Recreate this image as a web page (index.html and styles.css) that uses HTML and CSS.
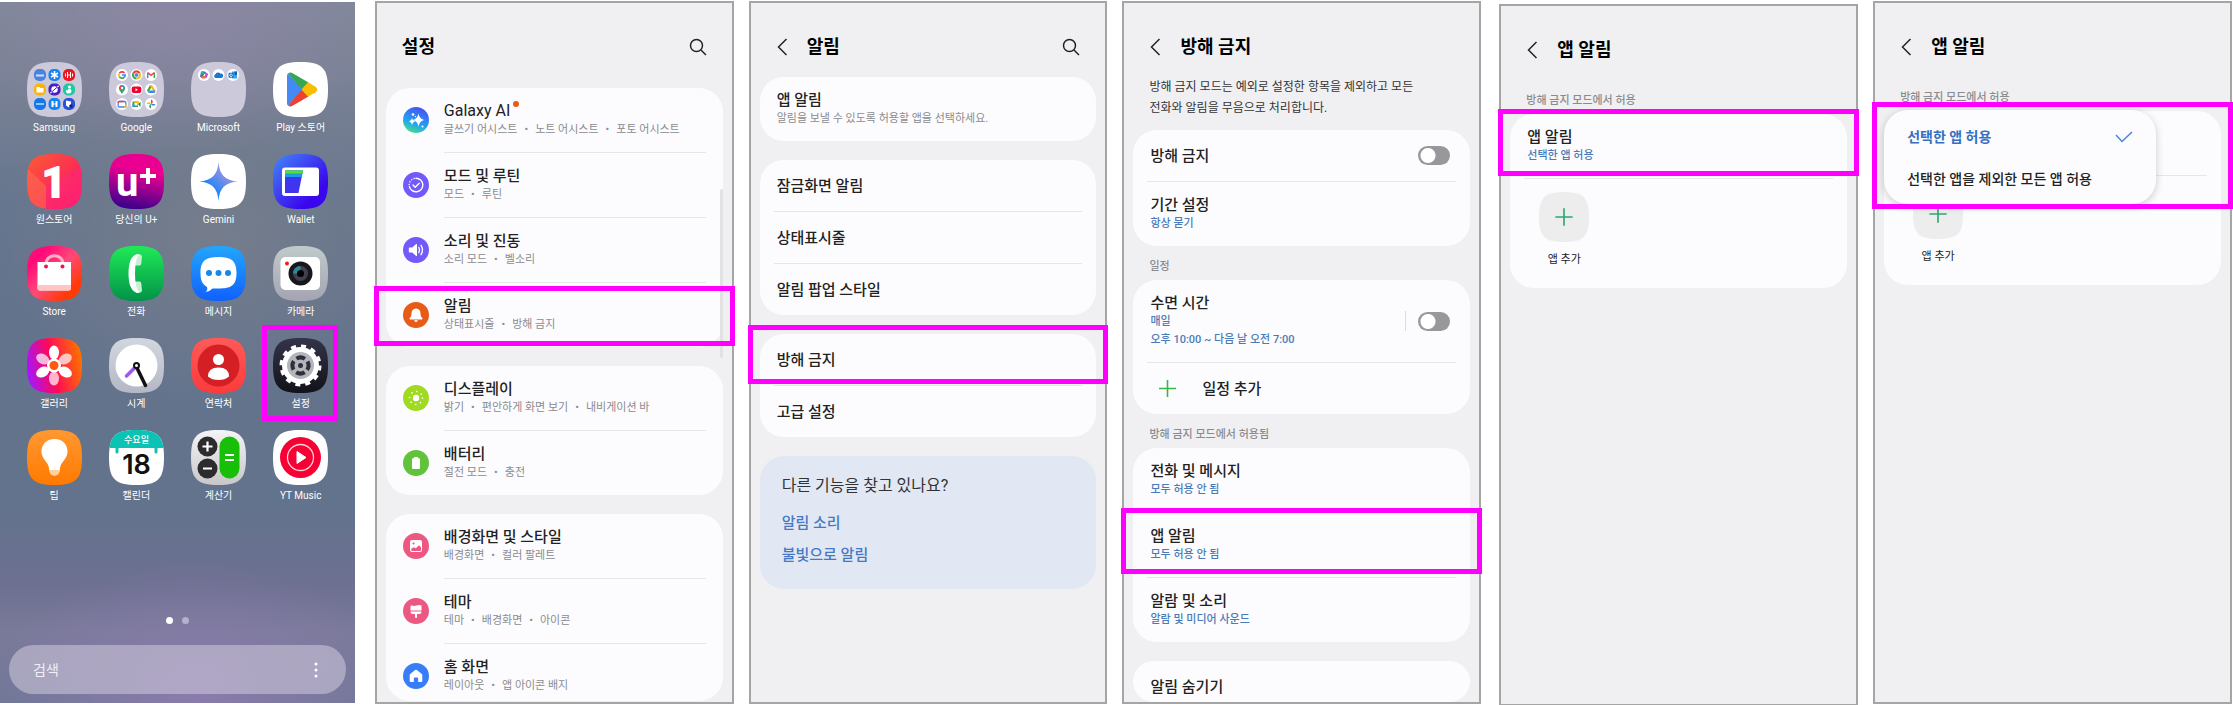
FILE: index.html
```html
<!DOCTYPE html>
<html lang="ko">
<head>
  <meta charset="UTF-8" />
  <meta name="viewport" content="width=device-width, initial-scale=1.0"/>
  <title>방해 금지 설정 방법</title>
  <link rel="stylesheet" href="styles.css">
</head>
<body>
  <svg class="defs" aria-hidden="true">
    <defs>
      <path id="tile" d="M27.5 0C49 0 55 6 55 27.5S49 55 27.5 55 0 49 0 27.5 6 0 27.5 0Z"/>
      <rect id="mini" width="12" height="12" rx="5"/>
      <circle id="miniRound" cx="6" cy="6" r="6"/>
      <clipPath id="tileClip"><use href="#tile"/></clipPath>
      <linearGradient id="gOne" x1="0" y1="0" x2="1" y2="1"><stop offset="0" stop-color="#fb5c33"/><stop offset="1" stop-color="#fb0a6c"/></linearGradient>
      <linearGradient id="gUplus" x1=".6" y1="0" x2=".4" y2="1"><stop offset=".3" stop-color="#ea0090"/><stop offset="1" stop-color="#38008c"/></linearGradient>
      <linearGradient id="gGemini" x1="0" y1="1" x2="1" y2="0"><stop offset=".3" stop-color="#1a84f5"/><stop offset=".8" stop-color="#b596e0"/></linearGradient>
      <linearGradient id="gWallet" x1="0" y1="0" x2="1" y2="1"><stop offset="0" stop-color="#4289f7"/><stop offset=".75" stop-color="#3a06ee"/></linearGradient>
      <linearGradient id="gStore" x1="0" y1="0" x2="1" y2="1"><stop offset=".2" stop-color="#ff0a78"/><stop offset=".5" stop-color="#ff4a78"/><stop offset=".8" stop-color="#ff3a08"/></linearGradient>
      <linearGradient id="gPhone" x1="0" y1="0" x2="0" y2="1"><stop offset="0" stop-color="#20ea58"/><stop offset="1" stop-color="#019248"/></linearGradient>
      <linearGradient id="gMsg" x1="0" y1="0" x2="0" y2="1"><stop offset="0" stop-color="#22a6fb"/><stop offset="1" stop-color="#1160fd"/></linearGradient>
      <linearGradient id="gCam" x1="0" y1="0" x2="0" y2="1"><stop offset="0" stop-color="#c1caca"/><stop offset="1" stop-color="#a4a4b2"/></linearGradient>
      <linearGradient id="gGal" x1="0" y1=".6" x2="1" y2=".4"><stop offset="0" stop-color="#a416ff"/><stop offset=".45" stop-color="#ff0858"/><stop offset="1" stop-color="#ff7200"/></linearGradient>
      <linearGradient id="gClock" x1="0" y1="0" x2="0" y2="1"><stop offset="0" stop-color="#d2d7df"/><stop offset="1" stop-color="#b4b8c4"/></linearGradient>
      <linearGradient id="gContact" x1="0" y1="0" x2="0" y2="1"><stop offset="0" stop-color="#ff5a58"/><stop offset="1" stop-color="#fd3a3c"/></linearGradient>
      <linearGradient id="gSet" x1="0" y1="0" x2="0" y2="1"><stop offset="0" stop-color="#34344a"/><stop offset="1" stop-color="#12121a"/></linearGradient>
      <linearGradient id="gTip" x1="0" y1="0" x2="0" y2="1"><stop offset="0" stop-color="#ff9832"/><stop offset="1" stop-color="#ff7a00"/></linearGradient>
      <linearGradient id="gCalc" x1="0" y1="0" x2="0" y2="1"><stop offset="0" stop-color="#f4f4f6"/><stop offset="1" stop-color="#c8c8ca"/></linearGradient>
      <linearGradient id="gAi" x1=".3" y1="1" x2=".7" y2="0"><stop offset="0" stop-color="#4fe07c"/><stop offset=".35" stop-color="#20a8f0"/><stop offset="1" stop-color="#4a4cf4"/></linearGradient>
    </defs>
  </svg>

  <main class="steps">
    <section class="home">
      <div class="apps">
        <a class="app" href="#">
          <svg viewBox="0 0 55 55">
            <use href="#tile" fill="#cbc9da"/>
            <g transform="translate(7 7)">
              <g><use href="#mini" fill="#4a82e0"/><path d="M2 6.5h8" stroke="#cfe0fa" stroke-width="2"/></g>
              <g transform="translate(14.5 0)"><use href="#mini" fill="#1583f5"/><path d="M6 2v8M2.5 4l7 4M9.500 4l-7 4" stroke="#fff" stroke-width="1.600"/></g>
              <g transform="translate(29 0)"><use href="#mini" fill="#f0141e"/><path d="M2.500 4.500v3M4.500 3v6M7.500 3v6M9.500 4.500v3M4.500 6h3" stroke="#fff"/></g>
              <g transform="translate(0 14.500)"><use href="#mini" fill="#f7b50c"/><path d="M2.500 3.500h3l1 1h3v4.500h-7z" fill="#fff"/></g>
              <g transform="translate(14.500 14.500)"><use href="#mini" fill="#4a1fc8"/><circle cx="6" cy="6" r="3.200" fill="#fff"/><path d="M2 9.500l8-7" stroke="#4a1fc8"/><path d="M1.500 9.500l2-1M8.500 3.500l2-1" stroke="#fff"/></g>
              <g transform="translate(29 14.500)"><use href="#mini" fill="#20c9a4"/><circle cx="6.500" cy="3.500" r="1.500" fill="#fff"/><path d="M6 5c3 0 3.500 5 0 5S3 8 3 6.500c1 1 2 0 3-1.500z" fill="#fff"/></g>
              <g transform="translate(0 29)"><use href="#mini" fill="#1478e8"/><path d="M2 6h8" stroke="#9cccf8" stroke-width="1.800"/></g>
              <g transform="translate(14.500 29)"><use href="#mini" fill="#1583f5"/><path d="M4 3v6M8 3v6" stroke="#fff" stroke-width="2"/><path d="M4 6h4" stroke="#fff"/></g>
              <g transform="translate(29 29)"><use href="#mini" fill="#2a50d8"/><path d="M3 2.500l5 1v3.500l-2 2.500-3-2z" fill="#fff"/><circle cx="8" cy="8" r="1.800" fill="#14257a"/></g>
            </g>
          </svg>
          <span>Samsung</span>
        </a>
        <a class="app" href="#">
          <svg viewBox="0 0 55 55">
            <use href="#tile" fill="#cbc9da"/>
            <g transform="translate(7 7)">
              <g><use href="#miniRound" fill="#fff"/><g fill="none" stroke-width="1.600"><path d="M8.500 4A3.200 3.200 0 0 0 3.300 4.400" stroke="#ea4335"/><path d="M3.300 4.400A3.200 3.200 0 0 0 3.300 7.600" stroke="#fbbc04"/><path d="M3.300 7.600A3.200 3.200 0 0 0 8 8.500" stroke="#34a853"/><path d="M8 8.500A3.200 3.200 0 0 0 9.200 6H6" stroke="#4285f4"/></g></g>
              <g transform="translate(14.500 0)"><use href="#miniRound" fill="#fff"/><path d="M6 6L2 3.700A4.600 4.600 0 0 1 10 3.700z" fill="#ea4335"/><path d="M6 6L2 3.700A4.600 4.600 0 0 0 6 10.600z" fill="#34a853"/><path d="M6 6l4-2.300A4.600 4.600 0 0 1 6 10.600z" fill="#fbbc04"/><circle cx="6" cy="6" r="2.200" fill="#4285f4" stroke="#fff" stroke-width=".700"/></g>
              <g transform="translate(29 0)"><use href="#miniRound" fill="#fff"/><path d="M2.700 9V4" stroke="#4285f4" stroke-width="1.500"/><path d="M9.300 9V4" stroke="#34a853" stroke-width="1.500"/><path d="M2.500 3.500L6 6.300l3.500-2.800" stroke="#ea4335" stroke-width="1.600" fill="none"/></g>
              <g transform="translate(0 14.500)"><use href="#miniRound" fill="#fff"/><path d="M6 10.500C5.500 8 3 7 3 4.500a3 3 0 0 1 3-3z" fill="#ea4335"/><path d="M6 10.500C6.500 8 9 7 9 4.500a3 3 0 0 0-3-3z" fill="#4285f4"/><path d="M6 10.500C5.700 9 4.200 8 3.500 6.500L8.600 3.500C10 6.500 6.500 8 6 10.500z" fill="#34a853"/><circle cx="6" cy="4.500" r="1.200" fill="#fff"/></g>
              <g transform="translate(14.500 14.500)"><use href="#miniRound" fill="#fff"/><rect x="1.200" y="3" width="9.600" height="6.500" rx="2" fill="#f5002e"/><path d="M5 4.800v3l2.500-1.500z" fill="#fff"/></g>
              <g transform="translate(29 14.500)"><use href="#miniRound" fill="#fff"/><path d="M4.700 2h2.600L3.300 9 2 7z" fill="#34a853"/><path d="M7.300 2H4.700l3.500 5.500h2.500z" fill="#fbbc04"/><path d="M4.500 7h6.200l-1.200 2.500H3.200z" fill="#4285f4"/></g>
              <g transform="translate(0 29)"><use href="#miniRound" fill="#fff"/><rect x="2.200" y="3.500" width="7.600" height="5.500" rx="1" fill="none" stroke="#4285f4" stroke-width="1.300"/><path d="M2.200 5V4.500a1 1 0 0 1 1-1H8" stroke="#ea4335" stroke-width="1.300" fill="none"/><path d="M9.800 6v3H8" stroke="#fbbc04" stroke-width="1.300" fill="none"/></g>
              <g transform="translate(14.500 29)"><use href="#miniRound" fill="#fff"/><path d="M2 3.500h5.500V9H2z" fill="#34a853"/><path d="M2 5.500h2V9H2z" fill="#4285f4"/><path d="M4 3.200h4.500v2.300H4z" fill="#fbbc04"/><path d="M4 5h3v2.500H4z" fill="#fff"/><path d="M7.500 6l2.500-2v5z" fill="#0a8a3c"/></g>
              <g transform="translate(29 29)"><use href="#miniRound" fill="#fff"/><path d="M6 6V1.500A2.300 2.300 0 0 1 6 6z" fill="#ea4335"/><path d="M6 6h4.500A2.300 2.300 0 0 1 6 6z" fill="#4285f4"/><path d="M6 6v4.500A2.300 2.300 0 0 1 6 6z" fill="#34a853"/><path d="M6 6H1.500A2.300 2.300 0 0 1 6 6z" fill="#fbbc04"/></g>
            </g>
          </svg>
          <span>Google</span>
        </a>
        <a class="app" href="#">
          <svg viewBox="0 0 55 55">
            <use href="#tile" fill="#cbc9da"/>
            <g transform="translate(7 7)">
              <g><use href="#miniRound" fill="#fff"/><path d="M3 2.500h4l1.500 2L6 5 4.500 9 2 8z" fill="#2a6fd0"/><path d="M8 3.500L10.300 5 8.500 9 6 8.500z" fill="#c050d0"/><path d="M2.500 7h4l1 2.500H4z" fill="#e8702a"/><path d="M3 3l2-1 1.500 2-3 2z" fill="#30b880"/></g>
              <g transform="translate(14.500 0)"><use href="#miniRound" fill="#fff"/><path d="M3.200 9a1.900 1.900 0 0 1-.2-3.700A2.800 2.800 0 0 1 8 4.700 2.200 2.200 0 0 1 9 9z" fill="#1478d4"/></g>
              <g transform="translate(29 0)"><use href="#miniRound" fill="#fff"/><path d="M5 2.500h5v7H5z" fill="#35a8ee"/><path d="M7.500 2.500H10V6H7.500z" fill="#0a62b8"/><rect x="1.500" y="3.800" width="5" height="5" rx="1" fill="#0f6cc4"/><circle cx="4" cy="6.300" r="1.300" fill="none" stroke="#fff" stroke-width=".8"/></g>
            </g>
          </svg>
          <span>Microsoft</span>
        </a>
        <a class="app" href="#">
          <svg viewBox="0 0 55 55">
            <use href="#tile" fill="#fff"/>
            <path d="M15 11.500Q14 12 14 14v27q0 2 1 2.500L30.500 27.500z" fill="#4489f4"/>
            <path d="M15 11.500q2-2 5 0l15.500 9-6.500 7z" fill="#34a751"/>
            <path d="M15 43.500q2 2 5 0l15.500-9-6.500-7z" fill="#ea4333"/>
            <path d="M35 20.300l7.500 4.500q3.500 2.700 0 5.400L35 34.700l-6.500-7.200z" fill="#fbbc04"/>
          </svg>
          <span>Play 스토어</span>
        </a>

        <a class="app" href="#">
          <svg viewBox="0 0 55 55">
            <g clip-path="url(#tileClip)">
              <rect width="55" height="55" fill="url(#gOne)"/>
              <path d="M0 14l19 18v23H0z" fill="#ff6a50" opacity=".6"/>
              <path d="M19 32l36-20v43H19z" fill="#ff2a76" opacity=".6"/>
              <text class="logo-one" x="15" y="43">1</text>
            </g>
          </svg>
          <span>원스토어</span>
        </a>
        <a class="app" href="#">
          <svg viewBox="0 0 55 55">
            <use href="#tile" fill="url(#gUplus)"/>
            <text class="logo-u" x="7" y="42">u</text>
            <path d="M39 14v16M31 22h16" stroke="#fff" stroke-width="4"/>
          </svg>
          <span>당신의 U+</span>
        </a>
        <a class="app" href="#">
          <svg viewBox="0 0 55 55">
            <use href="#tile" fill="#fff"/>
            <path d="M27.500 8C28.500 21 34 26.500 47 27.500 34 28.500 28.500 34 27.500 47 26.500 34 21 28.500 8 27.500 21 26.500 26.500 21 27.500 8Z" fill="url(#gGemini)"/>
          </svg>
          <span>Gemini</span>
        </a>
        <a class="app" href="#">
          <svg viewBox="0 0 55 55">
            <use href="#tile" fill="url(#gWallet)"/>
            <rect x="9" y="13.500" width="37" height="28.500" rx="3" fill="#fff"/>
            <path d="M12 39V17.500q0-1 1-1h17L25.500 39z" fill="#3f35f0"/>
            <path d="M12 23v-5.500q0-1 1-1h17L28.500 23z" fill="#1c9be8"/>
            <path d="M12 19.500v-2q0-1 1-1h17l-.7 3z" fill="#5ae01c"/>
          </svg>
          <span>Wallet</span>
        </a>

        <a class="app" href="#">
          <svg viewBox="0 0 55 55">
            <use href="#tile" fill="url(#gStore)"/>
            <path d="M19 18c0-11 17-11 17 0" fill="none" stroke="#ffb0c8" stroke-width="3"/>
            <path d="M10.500 16H44v26q0 2.500-2.500 2.500H13q-2.500 0-2.500-2.500z" fill="#fff"/>
            <path d="M10.500 39H44v3q0 2.500-2.500 2.500H13q-2.500 0-2.500-2.500z" fill="#ffc4c4"/>
            <circle cx="19" cy="20.500" r="2" fill="#e81858"/><circle cx="35.500" cy="20.500" r="2" fill="#e81858"/>
          </svg>
          <span>Store</span>
        </a>
        <a class="app" href="#">
          <svg viewBox="0 0 55 55">
            <use href="#tile" fill="url(#gPhone)"/>
            <path d="M27 8.500q4-1.500 6 1.500l-.7 7.500q0 2-2 2H26q-1-6 1-11zM27 46.500q4 1.500 6-1.500l-.7-7.500q0-2-2-2H26q-1 6 1 11z" fill="#c4f0d4"/>
            <path d="M27 8.500q2-.5 3 .5-4 4-4 18.500t4 18.500q-1 1-3 .5-7.500-3-7.500-19t7.500-19z" fill="#fff"/>
          </svg>
          <span>전화</span>
        </a>
        <a class="app" href="#">
          <svg viewBox="0 0 55 55">
            <use href="#tile" fill="url(#gMsg)"/>
            <path d="M27.500 11C40 11 45.500 14.500 45.500 27S40 42.500 27.500 42.500q-3.500 0-6 0-2.500 3-7 3.500 2.500-2 1.500-5C11 38 9.500 34 9.500 27 9.500 14.500 15 11 27.500 11z" fill="#fff"/>
            <g fill="#1a86e8"><circle cx="18" cy="27" r="3"/><circle cx="27.500" cy="27" r="3"/><circle cx="37" cy="27" r="3"/></g>
          </svg>
          <span>메시지</span>
        </a>
        <a class="app" href="#">
          <svg viewBox="0 0 55 55">
            <use href="#tile" fill="url(#gCam)"/>
            <rect x="7.500" y="11" width="39.500" height="33" rx="5" fill="#fff"/>
            <circle cx="14" cy="17.500" r="2" fill="#f01c1c"/>
            <circle cx="27.500" cy="27.500" r="12" fill="#18181c"/>
            <circle cx="27.500" cy="27.500" r="7.500" fill="#41424e"/>
            <path d="M27.500 20a7.500 7.500 0 0 0-7.500 7.500h7.500z" fill="#2a8a9c"/>
            <circle cx="27.500" cy="27.500" r="3.500" fill="#000"/>
          </svg>
          <span>카메라</span>
        </a>

        <a class="app" href="#">
          <svg viewBox="0 0 55 55">
            <use href="#tile" fill="url(#gGal)"/>
            <g fill="#fff" transform="translate(27 27.500)">
              <ellipse cy="-13" rx="5" ry="7"/>
              <ellipse cy="-13" rx="5" ry="7" transform="rotate(60)" opacity=".7"/>
              <ellipse cy="-13" rx="5" ry="7" transform="rotate(120)"/>
              <ellipse cy="-13" rx="5" ry="7" transform="rotate(180)" opacity=".7"/>
              <ellipse cy="-13" rx="5" ry="7" transform="rotate(240)"/>
              <ellipse cy="-13" rx="5" ry="7" transform="rotate(300)" opacity=".7"/>
              <circle r="7"/>
              <circle r="4.500" fill="#ff5a10"/>
            </g>
          </svg>
          <span>갤러리</span>
        </a>
        <a class="app" href="#">
          <svg viewBox="0 0 55 55">
            <use href="#tile" fill="url(#gClock)"/>
            <circle cx="27.500" cy="27.500" r="21" fill="#fff"/>
            <path d="M25.500 30L17.500 38" stroke="#a155f5" stroke-width="3.500" stroke-linecap="round"/>
            <path d="M28 30l8.500 17.500" stroke="#111" stroke-width="3.500" stroke-linecap="round"/>
            <circle cx="27.500" cy="27.500" r="2.500" fill="#fff" stroke="#111" stroke-width="2"/>
          </svg>
          <span>시계</span>
        </a>
        <a class="app" href="#">
          <svg viewBox="0 0 55 55">
            <use href="#tile" fill="url(#gContact)"/>
            <circle cx="27.500" cy="27.500" r="21" fill="#d42024"/>
            <circle cx="27.500" cy="21.500" r="5.500" fill="#fff"/>
            <path d="M17 38.500q0-9 10.500-9t10.500 9q-4 3.500-10.500 3.500T17 38.500z" fill="#fff"/>
          </svg>
          <span>연락처</span>
        </a>
        <a class="app mark mark-app" href="#">
          <svg viewBox="0 0 55 55">
            <use href="#tile" fill="url(#gSet)"/>
            <circle cx="27.500" cy="27.500" r="19" fill="none" stroke="#fff" stroke-width="4" stroke-dasharray="4.970 4.970"/>
            <circle cx="27.500" cy="27.500" r="18.500" fill="#fff"/>
            <circle cx="27.500" cy="27.500" r="13.500" fill="#b4b5bb"/>
            <circle cx="27.500" cy="27.500" r="8" fill="none" stroke="#2d2f3b" stroke-width="4" stroke-dasharray="8.800 3.766" stroke-dashoffset="-1.900" transform="rotate(45 27.500 27.500)"/>
            <circle cx="27.500" cy="27.500" r="2.500" fill="#2d2f3b"/>
          </svg>
          <span>설정</span>
        </a>

        <a class="app" href="#">
          <svg viewBox="0 0 55 55">
            <use href="#tile" fill="url(#gTip)"/>
            <path d="M27.500 9C19 9 14.500 15 14.500 21.500c0 8 7 10 7.500 17 .3 4 2 7 5.500 7s5.200-3 5.500-7c.5-7 7.500-9 7.500-17C40.500 15 36 9 27.500 9z" fill="#fff"/>
            <path d="M22 40h11q-1 5.500-5.500 5.500T22 40z" fill="#ffcf9c"/>
          </svg>
          <span>팁</span>
        </a>
        <a class="app" href="#">
          <svg viewBox="0 0 55 55">
            <g clip-path="url(#tileClip)">
              <rect width="55" height="55" fill="#fff"/>
              <path d="M0 0h55v18H0z" fill="#0bc2b4"/>
              <path d="M8 17v5M47 17v5" stroke="#0bc2b4" stroke-width="3" stroke-linecap="round"/>
            </g>
            <text class="cal-day" x="27.500" y="13">수요일</text>
            <text class="cal-date" x="27.500" y="44">18</text>
          </svg>
          <span>캘린더</span>
        </a>
        <a class="app" href="#">
          <svg viewBox="0 0 55 55">
            <use href="#tile" fill="url(#gCalc)"/>
            <circle cx="16.500" cy="16.500" r="10" fill="#2c2c2e"/><circle cx="16.500" cy="38.500" r="10" fill="#2c2c2e"/>
            <rect x="28.500" y="6.500" width="20" height="42" rx="10" fill="#17bf08"/>
            <path d="M16.500 11.500v10M11.500 16.500h10M12 38.500h9M34 25h9M34 30h9" stroke="#fff" stroke-width="2.200"/>
          </svg>
          <span>계산기</span>
        </a>
        <a class="app" href="#">
          <svg viewBox="0 0 55 55">
            <use href="#tile" fill="#fff"/>
            <circle cx="27.500" cy="27.500" r="20.500" fill="#f70033"/>
            <circle cx="27.500" cy="27.500" r="13" fill="none" stroke="#ffd0d8" stroke-width="1.300"/>
            <path d="M24 21.500v12l9-6z" fill="#fff" stroke="#fff"/>
          </svg>
          <span>YT Music</span>
        </a>
      </div>

      <div class="pager"><i class="on"></i><i></i></div>
      <div class="finder">
        <input type="text" placeholder="검색" aria-label="검색">
        <button type="button" aria-label="더보기">
          <svg viewBox="0 0 4 16" width="4" height="16" fill="#fff"><circle cx="2" cy="2" r="1.500"/><circle cx="2" cy="8" r="1.500"/><circle cx="2" cy="14" r="1.500"/></svg>
        </button>
      </div>
    </section>

    <section class="phone">
      <header class="bar bar-tall">
        <h2>설정</h2>
        <button type="button" class="find" aria-label="검색">
          <svg viewBox="0 0 18 18" width="18" height="18"><circle cx="7.500" cy="7.500" r="6"/><path d="M12 12l5 5"/></svg>
        </button>
      </header>
      <div class="scrollbar"></div>
      <div class="card">
        <a class="row icon-row" href="#">
          <svg class="badge" viewBox="0 0 26 26"><circle cx="13" cy="13" r="13" fill="url(#gAi)"/><path d="M15.500 6.500q.8 5.200 5.500 6.500-4.700 1.300-5.500 6.500-.8-5.200-5.500-6.500 4.700-1.300 5.500-6.500zM9 11q.4 2.600 3 3.500-2.600.9-3 3.500-.4-2.600-3-3.500 2.600-.9 3-3.500z" fill="#fff"/><g fill="#fff"><circle cx="10" cy="7.500" r="1.300"/><circle cx="19.500" cy="19.500" r="1"/><circle cx="12.500" cy="9.500" r=".7"/></g></svg>
          <span class="text"><b class="latin">Galaxy AI<i class="new"></i></b><small>글쓰기 어시스트<i>•</i>노트 어시스트<i>•</i>포토 어시스트</small></span>
        </a>
        <a class="row icon-row" href="#">
          <svg class="badge" viewBox="0 0 26 26"><circle cx="13" cy="13" r="13" fill="#7259fb"/><g fill="none" stroke="#fff" stroke-width="1.400" stroke-linecap="round"><path d="M13 6.200a6.800 6.800 0 1 1-6.600 8.400"/><path d="M6.200 12.500a6.800 6.800 0 0 1 5-6" stroke-dasharray=".1 2.600"/><path d="M10 13l2.200 2.300 4-4" stroke-linejoin="round"/></g></svg>
          <span class="text"><b>모드 및 루틴</b><small>모드<i>•</i>루틴</small></span>
        </a>
        <a class="row icon-row" href="#">
          <svg class="badge" viewBox="0 0 26 26"><circle cx="13" cy="13" r="13" fill="#7259fb"/><path d="M6.500 10.500h2.700l4-3.500q.8-.4.800.6v10.800q0 1-.8.600l-4-3.500H6.500q-.7 0-.7-.7v-3.600q0-.7.7-.7z" fill="#fff"/><path d="M15.800 10.300q1.600 2.700 0 5.400M18 8.300q3 4.700 0 9.400" fill="none" stroke="#fff" stroke-width="1.300" stroke-linecap="round"/></svg>
          <span class="text"><b>소리 및 진동</b><small>소리 모드<i>•</i>벨소리</small></span>
        </a>
        <a class="row icon-row mark mark-alert" href="#">
          <svg class="badge" viewBox="0 0 26 26"><circle cx="13" cy="13" r="13" fill="#e85a17"/><path d="M13 6.500c-3 0-4.500 2.200-4.500 4.800 0 3-1 3.800-1.700 4.700-.6.900 0 1.500.7 1.500h11c.7 0 1.300-.6.700-1.500-.7-.9-1.700-1.700-1.700-4.700 0-2.600-1.500-4.800-4.500-4.800zM11 18.300h4q-.5 1.700-2 1.700t-2-1.700z" fill="#fff"/></svg>
          <span class="text"><b>알림</b><small>상태표시줄<i>•</i>방해 금지</small></span>
        </a>
      </div>
      <div class="card">
        <a class="row icon-row" href="#">
          <svg class="badge" viewBox="0 0 26 26"><circle cx="13" cy="13" r="13" fill="#a0da22"/><circle cx="13" cy="13" r="3.200" fill="#fff"/><circle cx="13" cy="13" r="6.500" fill="none" stroke="#fff" stroke-width="1.600" stroke-linecap="round" stroke-dasharray=".1 5"/></svg>
          <span class="text"><b>디스플레이</b><small>밝기<i>•</i>편안하게 화면 보기<i>•</i>내비게이션 바</small></span>
        </a>
        <a class="row icon-row" href="#">
          <svg class="badge" viewBox="0 0 26 26"><circle cx="13" cy="13" r="13" fill="#61c33b"/><path d="M11 7h4v1.200h.8q1.200 0 1.200 1.200v8.400q0 1.200-1.200 1.200h-5.600q-1.200 0-1.200-1.200V9.400q0-1.200 1.200-1.200h.8z" fill="#fff"/></svg>
          <span class="text"><b>배터리</b><small>절전 모드<i>•</i>충전</small></span>
        </a>
      </div>
      <div class="card card-end">
        <a class="row icon-row" href="#">
          <svg class="badge" viewBox="0 0 26 26"><circle cx="13" cy="13" r="13" fill="#ed5882"/><rect x="7" y="7" width="12" height="12" rx="2" fill="#fff"/><path d="M8.200 17v-1.200l2.600-1.600 2 1 3.200-3 2 2V17q0 1-1 1H9.200q-1 0-1-1z" fill="#ed5882"/><circle cx="10.500" cy="10.500" r="1.100" fill="#ed5882"/></svg>
          <span class="text"><b>배경화면 및 스타일</b><small>배경화면<i>•</i>컬러 팔레트</small></span>
        </a>
        <a class="row icon-row" href="#">
          <svg class="badge" viewBox="0 0 26 26"><circle cx="13" cy="13" r="13" fill="#ed5882"/><path d="M7.500 8.500q0-1.500 1.500-1 2 .8 4.500 0t5 0v5H7.500zM7.500 13.500h11q0 2.500-2.500 2.500h-2v3.200q0 .8-1 .8t-1-.8V16h-2q-2.500 0-2.500-2.500z" fill="#fff"/></svg>
          <span class="text"><b>테마</b><small>테마<i>•</i>배경화면<i>•</i>아이콘</small></span>
        </a>
        <a class="row icon-row" href="#">
          <svg class="badge" viewBox="0 0 26 26"><circle cx="13" cy="13" r="13" fill="#377df8"/><path d="M12.200 7q.8-.6 1.600 0l5 4q.5.400.5 1v6q0 1-1 1h-3.100v-3.500q0-1-1-1h-2.400q-1 0-1 1V19H7.700q-1 0-1-1v-6q0-.6.5-1z" fill="#fff"/></svg>
          <span class="text"><b>홈 화면</b><small>레이아웃<i>•</i>앱 아이콘 배지</small></span>
        </a>
      </div>
    </section>

    <section class="phone">
      <header class="bar">
        <button type="button" class="back" aria-label="뒤로"><svg viewBox="0 0 11 18" width="11" height="18"><path d="M9.500 1L1.500 9l8 8"/></svg></button>
        <h2>알림</h2>
        <button type="button" class="find" aria-label="검색">
          <svg viewBox="0 0 18 18" width="18" height="18"><circle cx="7.500" cy="7.500" r="6"/><path d="M12 12l5 5"/></svg>
        </button>
      </header>
      <div class="card">
        <a class="row" href="#"><span class="text"><b>앱 알림</b><small>알림을 보낼 수 있도록 허용할 앱을 선택하세요.</small></span></a>
      </div>
      <div class="card">
        <a class="row" href="#"><b>잠금화면 알림</b></a>
        <a class="row" href="#"><b>상태표시줄</b></a>
        <a class="row" href="#"><b>알림 팝업 스타일</b></a>
      </div>
      <div class="card">
        <a class="row mark mark-dnd" href="#"><b>방해 금지</b></a>
        <a class="row" href="#"><b>고급 설정</b></a>
      </div>
      <div class="card tips">
        <h3>다른 기능을 찾고 있나요?</h3>
        <a href="#">알림 소리</a>
        <a href="#">불빛으로 알림</a>
      </div>
    </section>

    <section class="phone">
      <header class="bar">
        <button type="button" class="back" aria-label="뒤로"><svg viewBox="0 0 11 18" width="11" height="18"><path d="M9.500 1L1.500 9l8 8"/></svg></button>
        <h2>방해 금지</h2>
      </header>
      <p class="intro">방해 금지 모드는 예외로 설정한 항목을 제외하고 모든<br>전화와 알림을 무음으로 처리합니다.</p>
      <div class="card">
        <label class="row"><b>방해 금지</b><input type="checkbox" class="switch"></label>
        <a class="row" href="#"><span class="text link"><b>기간 설정</b><small>항상 묻기</small></span></a>
      </div>
      <h3 class="group">일정</h3>
      <div class="card">
        <label class="row"><span class="text link"><b>수면 시간</b><small>매일<br>오후 10:00 ~ 다음 날 오전 7:00</small></span><span class="split"></span><input type="checkbox" class="switch"></label>
        <a class="row add" href="#"><svg viewBox="0 0 17 17" width="17" height="17"><path d="M8.500 0v17M0 8.500h17"/></svg><b>일정 추가</b></a>
      </div>
      <h3 class="group">방해 금지 모드에서 허용됨</h3>
      <div class="card">
        <a class="row" href="#"><span class="text link"><b>전화 및 메시지</b><small>모두 허용 안 됨</small></span></a>
        <a class="row mark mark-allow" href="#"><span class="text link"><b>앱 알림</b><small>모두 허용 안 됨</small></span></a>
        <a class="row" href="#"><span class="text link"><b>알람 및 소리</b><small>알람 및 미디어 사운드</small></span></a>
      </div>
      <div class="card card-end">
        <a class="row" href="#"><b>알림 숨기기</b></a>
      </div>
    </section>

    <section class="phone phone-low">
      <header class="bar">
        <button type="button" class="back" aria-label="뒤로"><svg viewBox="0 0 11 18" width="11" height="18"><path d="M9.500 1L1.500 9l8 8"/></svg></button>
        <h2>앱 알림</h2>
      </header>
      <h3 class="group">방해 금지 모드에서 허용</h3>
      <div class="card">
        <a class="row mark mark-pick" href="#"><span class="text link"><b>앱 알림</b><small>선택한 앱 허용</small></span></a>
        <div class="row tiles">
          <button type="button" class="add-app">
            <svg viewBox="0 0 55 55" width="50" height="50"><use href="#tile" fill="#ededed"/><path d="M27.500 18v19M18 27.500h19" stroke="#2ba872" stroke-width="1.800"/></svg>
            앱 추가
          </button>
        </div>
      </div>
    </section>

    <section class="phone">
      <header class="bar">
        <button type="button" class="back" aria-label="뒤로"><svg viewBox="0 0 11 18" width="11" height="18"><path d="M9.500 1L1.500 9l8 8"/></svg></button>
        <h2>앱 알림</h2>
      </header>
      <h3 class="group">방해 금지 모드에서 허용</h3>
      <div class="card">
        <div class="row mark mark-menu">
          <div class="menu">
            <button type="button" class="chosen">선택한 앱 허용
              <svg viewBox="0 0 18 12" width="18" height="12"><path d="M1 4l6 6.500L17 1"/></svg>
            </button>
            <button type="button">선택한 앱을 제외한 모든 앱 허용</button>
          </div>
        </div>
        <div class="row tiles">
          <button type="button" class="add-app">
            <svg viewBox="0 0 55 55" width="50" height="50"><use href="#tile" fill="#ededed"/><path d="M27.500 18v19M18 27.500h19" stroke="#2ba872" stroke-width="1.800"/></svg>
            앱 추가
          </button>
        </div>
      </div>
    </section>
  </main>
</body>
</html>
```
FILE: styles.css
```css
* {
  box-sizing: border-box;
}
body {
  margin: 0;
  background: #fff;
  color: #222;
  font-family: Roboto, "Noto Sans CJK KR", sans-serif;
  font-size: 15px;
}
a {
  color: inherit;
  text-decoration: none;
}
button {
  padding: 0;
  border: 0;
  background: none;
  color: inherit;
  font: inherit;
}
svg {
  display: block;
}
h2, h3, p {
  margin: 0;
}
.defs {
  position: absolute;
  width: 0;
  height: 0;
}
.steps {
  display: flex;
  gap: 15px;
  padding: 1px 1px 2px 0;
}

/* home screen */
.home {
  flex: 1 1 355px;
  display: flex;
  flex-direction: column;
  margin: 1px 5px 1px 0;
  padding: 60px 9px 9px;
  background:
    radial-gradient(ellipse 60% 22% at 50% 0, #8c86a4, transparent),
    radial-gradient(ellipse 60% 20% at 55% 100%, #8a7cac, transparent),
    radial-gradient(ellipse 60% 25% at 60% 33%, #757d8c, transparent),
    linear-gradient(#80889a 0, #7b8296 10%, #66768e 28%, #64738c 45%, #63738d 72%, #6d7091 83%, #7a7a9a 90%, #6f7795 100%);
}
.apps {
  display: grid;
  grid-template-columns: repeat(4, 1fr);
  row-gap: 19px;
  padding: 0 4px;
}
.app {
  position: relative;
  display: flex;
  flex-direction: column;
  align-items: center;
  gap: 4px;
  color: #fff;
  font-size: 10px;
  line-height: 14px;
}
.app svg {
  width: 55px;
  height: 55px;
}
.logo-one {
  fill: #fff;
  stroke: #fff;
  stroke-width: 2px;
  stroke-linejoin: round;
  font: 700 42px Roboto, sans-serif;
}
.logo-u {
  fill: #fff;
  font: 700 40px Roboto, sans-serif;
}
.cal-day {
  fill: #fff;
  font: 500 9px "Noto Sans CJK KR", sans-serif;
  text-anchor: middle;
}
.cal-date {
  fill: #111;
  font: 600 27px Inter, sans-serif;
  text-anchor: middle;
}
.pager {
  display: flex;
  justify-content: center;
  gap: 9px;
  margin-top: auto;
  padding-bottom: 21px;
}
.pager i {
  width: 7px;
  height: 7px;
  border-radius: 50%;
  background: #b3b1cc;
}
.pager .on {
  background: #fff;
}
.finder {
  display: flex;
  align-items: center;
  height: 49px;
  padding: 0 28px 0 24px;
  border-radius: 25px;
  background: rgba(209, 203, 220, 0.55);
}
.finder input {
  flex: 1;
  min-width: 0;
  padding: 0;
  border: 0;
  background: none;
  font: inherit;
  font-size: 14px;
}
.finder input::placeholder {
  color: #f0eef6;
}

/* settings screens */
.phone {
  position: relative;
  flex: 1 1 359px;
  display: flex;
  flex-direction: column;
  min-width: 0;
  padding: 0 9px;
  border: 2px solid #a5a5a5;
  background: #f0f0f2;
}
.phone-low {
  margin: 3px 0 -2px 3px;
}
.bar {
  display: flex;
  align-items: center;
  padding: 31px 16px 17px;
  line-height: 26px;
}
.bar-tall {
  padding-bottom: 28px;
}
.bar h2 {
  flex: 1;
  color: #000;
  font-size: 18px;
  font-weight: 700;
}
.bar svg {
  fill: none;
  stroke: #222;
  stroke-width: 1.5;
}
.back {
  margin: 0 19px 0 1px;
}
.card {
  border-radius: 24px;
  background: #fcfcfe;
}
.card + .card {
  margin-top: 19px;
}
.row {
  position: relative;
  display: flex;
  align-items: center;
  min-height: 51px;
  padding: 0 20px 0 17px;
  line-height: 20px;
}
.row + .row {
  margin-top: 1px;
}
.row + .row::before {
  content: "";
  position: absolute;
  top: -1px;
  left: 14px;
  right: 14px;
  border-top: 1px solid #e6e6e9;
}
.icon-row + .icon-row::before {
  left: 58px;
  right: 17px;
}
.row b {
  flex: 1;
  display: block;
  font-weight: 500;
}
.row .latin {
  font-size: 16px;
  font-weight: 400;
}
.text {
  flex: 1;
  padding: 13px 0;
}
.text small {
  display: block;
  color: #8b8b8f;
  font-size: 11px;
  line-height: 18px;
}
.text small i {
  padding: 0 7px;
  font-style: normal;
}
.link small {
  color: #4a7bb8;
  font-weight: 500;
}
.badge {
  width: 26px;
  height: 26px;
  margin-right: 15px;
}
.new {
  display: inline-block;
  width: 6px;
  height: 6px;
  margin-left: 3px;
  border-radius: 50%;
  background: #e65a14;
  vertical-align: 9px;
}
.card-end .row:last-child {
  height: 41px;
  min-height: 0;
  padding-top: 10px;
}
.card-end .icon-row:last-child {
  height: 57px;
  padding-top: 7px;
}
.scrollbar {
  position: absolute;
  top: 186px;
  right: 9px;
  z-index: 1;
  width: 3px;
  height: 169px;
  border-radius: 2px;
  background: #e2e2e5;
}
.tips {
  display: flex;
  flex-direction: column;
  gap: 12px;
  padding: 18px 22px 24px;
  background: #e1e8f4;
  color: #4679c4;
  font-weight: 500;
  line-height: 20px;
}
.tips h3 {
  margin-bottom: 3px;
  color: #333;
  font-size: 16px;
  font-weight: 400;
  line-height: 24px;
}
.intro {
  padding: 0 16px 11px;
  color: #333;
  font-size: 12px;
  line-height: 21px;
}
.group {
  padding: 12px 16px 4px;
  color: #8b8b8f;
  font-size: 11px;
  font-weight: 500;
  line-height: 18px;
}
.switch {
  appearance: none;
  width: 32px;
  height: 19px;
  margin: 0;
  border-radius: 10px;
  background: radial-gradient(circle at 10px 50%, #fff 7px, transparent 8px), #98979c;
}
.split {
  height: 20px;
  margin-right: 12px;
  border-left: 1px solid #dcdce0;
}
.add {
  padding-left: 26px;
}
.add svg {
  margin-right: 26px;
  stroke: #3db544;
  stroke-width: 1.6;
}
.tiles {
  padding: 13px 29px 18px;
}
.add-app {
  display: flex;
  flex-direction: column;
  align-items: center;
  gap: 8px;
  font-size: 11px;
  line-height: 20px;
}
.menu {
  position: absolute;
  top: -1px;
  left: 0;
  z-index: 1;
  width: 272px;
  padding: 6px 23px 4px;
  border-radius: 24px;
  background: #fcfcfe;
  box-shadow: 0 2px 8px rgba(0, 0, 0, 0.2);
  font-size: 14px;
}
.menu button {
  display: flex;
  align-items: center;
  justify-content: space-between;
  width: 100%;
  height: 42px;
  font-weight: 500;
}
.menu .chosen {
  color: #3470c4;
  font-weight: 700;
}
.menu svg {
  fill: none;
  stroke: #4a86d8;
  stroke-width: 1.5;
}

/* step highlight */
.mark::after {
  content: "";
  position: absolute;
  left: -12px;
  right: -12px;
  z-index: 2;
  border: 5px solid #f0f;
}
.mark-app::after {
  top: -13px;
  bottom: -10px;
  left: 2px;
  right: 4px;
}
.mark-alert::after {
  top: 3px;
  bottom: 1px;
}
.mark-dnd::after {
  top: -9px;
  bottom: 1px;
}
.mark-allow::after {
  top: -5px;
  bottom: 3px;
}
.mark-pick::after {
  top: -5px;
  bottom: 2px;
}
.mark-menu {
  min-height: 64px;
}
.mark-menu::after {
  top: -9px;
  bottom: -34px;
}
```
